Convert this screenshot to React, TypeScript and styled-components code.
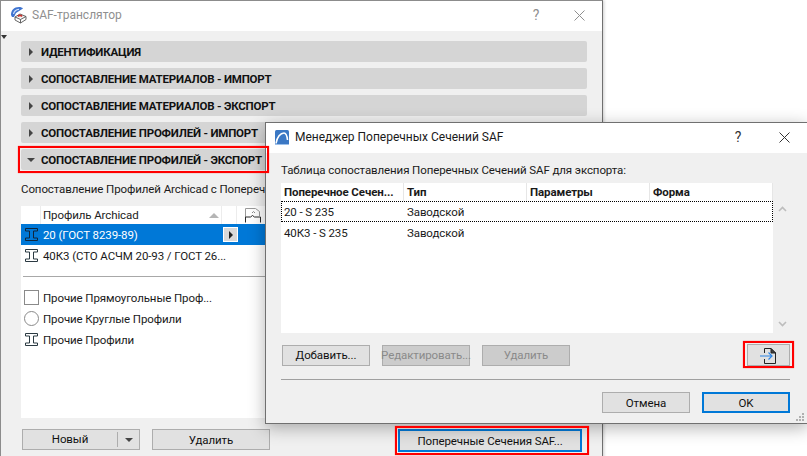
import React from "react";
import styled, {createGlobalStyle} from "styled-components";

const GlobalStyle = createGlobalStyle`
  html, body {
    margin: 0;
    height: 100%;
    overflow: hidden;
    background: #fff;
  }
  body {
    font-family: Roboto, "Open Sans", "Liberation Sans", sans-serif;
    font-size: 11.5px;
    letter-spacing: -.1px;
    color: #000;
  }
`

const Desktop = styled.div`
  position: relative;
  width: 807px;
  height: 456px;
  overflow: hidden;
`
const MainWindow = styled.div`
  position: absolute;
  left: 0;
  top: 0;
  width: 603px;
  height: 480px;
  box-sizing: border-box;
  border: 1px solid #8c8c8c;
  border-right-color: #707070;
  background: #f0f0f0;
  display: flex;
  flex-direction: column;
  box-shadow: 1px 0 3px rgba(0, 0, 0, .2);
`
const Dialog = styled.div`
  position: absolute;
  left: 265px;
  top: 122px;
  width: 543px;
  height: 302px;
  box-sizing: border-box;
  border: 1px solid #707070;
  background: #f0f0f0;
  display: flex;
  flex-direction: column;
  box-shadow: 0 4px 16px rgba(0, 0, 0, .3);
`
const TitleBar = styled.div<{ $height: number }>`
  height: ${props => props.$height}px;
  flex: none;
  background: #fff;
  display: flex;
  align-items: center;
  padding-bottom: 2px;
  box-sizing: border-box;
`
const TitleText = styled.div<{ $inactive?: boolean }>`
  font-size: 12px;
  letter-spacing: 0;
  margin-left: 4px;
  flex: 1;
  color: ${props => props.$inactive ? '#8f8f8f' : '#1a1a1a'};
`
const TitleGlyph = styled.div<{ $inactive?: boolean, $width: number }>`
  width: ${props => props.$width}px;
  text-align: center;
  font-size: 14px;
  display: flex;
  justify-content: center;
  color: ${props => props.$inactive ? '#8f8f8f' : '#333'};
`
const MainIconSlot = styled.div`
  width: 18px;
  height: 18px;
  margin-left: 9px;
`
const DialogIconSlot = styled.div`
  width: 14px;
  height: 15px;
  margin-left: 9px;
  margin-right: 2px;
`
const MainBody = styled.div`
  flex: 1;
  padding: 10px 15px 0 20px;
  display: flex;
  flex-direction: column;
  position: relative;
`
const CornerArrow = styled.div`
  position: absolute;
  left: 0;
  top: 4px;
  border-left: 3px solid transparent;
  border-right: 3px solid transparent;
  border-top: 4px solid #333;
`
const Sections = styled.div`
  display: flex;
  flex-direction: column;
  row-gap: 6px;
`
const Section = styled.div`
  height: 21px;
  background: #d5d5d5;
  border-radius: 2px;
  display: flex;
  align-items: center;
  font-weight: 700;
  font-size: 11.5px;
  letter-spacing: -.2px;
  color: #111;
  column-gap: 5px;
`
const ArrowSlot = styled.span`
  width: 15px;
  padding-left: 8px;
  box-sizing: border-box;
  display: flex;
`
const ArrowRight = styled.span`
  border-top: 4px solid transparent;
  border-bottom: 4px solid transparent;
  border-left: 4px solid #444;
`
const ArrowDown = styled.span`
  margin-left: -2px;
  border-left: 4px solid transparent;
  border-right: 4px solid transparent;
  border-top: 4px solid #444;
`
const Caption = styled.div<{ $top: number }>`
  margin-top: ${props => props.$top}px;
  height: 18px;
  line-height: 18px;
  white-space: nowrap;
  color: #1a1a1a;
`
const ProfileList = styled.div`
  margin-top: 8px;
  height: 212px;
  background: #fff;
  display: flex;
  flex-direction: column;
`
const ListHead = styled.div`
  height: 18px;
  display: flex;
  align-items: center;
`
const HeadCell = styled.div<{ $width?: number, $inset?: number }>`
  width: ${props => props.$width ?? 20}px;
  height: 100%;
  box-sizing: border-box;
  border-right: 1px solid #ececec;
  padding-left: ${props => props.$inset ?? 2}px;
  display: flex;
  align-items: center;
  justify-content: space-between;
  flex: none;
  color: #222;
`
const SortArrow = styled.span`
  margin-right: 2px;
  border-left: 5px solid transparent;
  border-right: 5px solid transparent;
  border-bottom: 5px solid #b5b5b5;
`
const ProfileRow = styled.div<{ $selected?: boolean }>`
  height: 21px;
  display: flex;
  align-items: center;
  background: ${props => props.$selected ? '#0078d7' : 'transparent'};
  color: ${props => props.$selected ? '#fff' : '#1a1a1a'};
`
const RowIcon = styled.div`
  width: 20px;
  flex: none;
  padding-left: 3px;
  box-sizing: border-box;
  display: flex;
`
const RowName = styled.div`
  width: 181px;
  flex: none;
  padding-left: 2px;
  box-sizing: border-box;
  white-space: nowrap;
`
const RowButton = styled.div`
  width: 15px;
  height: 15px;
  margin-left: 1px;
  background: #d9d9d9;
  box-sizing: border-box;
  border: 1px solid #fff;
  display: flex;
  align-items: center;
  justify-content: center;
`
const RowArrow = styled.span`
  border-top: 4px solid transparent;
  border-bottom: 4px solid transparent;
  border-left: 4px solid #222;
`
const ListDivider = styled.div`
  height: 1px;
  margin: 10px 0 10px 2px;
  background: #a8a8a8;
`
const Square = styled.span`
  width: 13px;
  height: 13px;
  border: 1px solid #8a8a8a;
  display: block;
`
const Circle = styled(Square)`
  border-radius: 50%;
`
const Footer = styled.div`
  margin-top: 11px;
  padding-left: 1px;
  display: flex;
  align-items: flex-start;
`
const Button = styled.div<{ $width?: number, $height?: number, $disabled?: boolean, $primary?: boolean, $left?: number }>`
  width: ${props => props.$width ?? 88}px;
  height: ${props => props.$height ?? 21}px;
  margin-left: ${props => props.$left ?? 0}px;
  flex: none;
  box-sizing: border-box;
  border: ${props => props.$primary ? '2px solid #0078d7' : '1px solid #adadad'};
  background: ${props => props.$disabled ? '#cccccc' : '#e1e1e1'};
  color: ${props => props.$disabled ? '#8a8a8a' : '#111'};
  display: flex;
  align-items: center;
  justify-content: center;
  white-space: nowrap;
`
const SplitButton = styled(Button)`
  justify-content: flex-start;
`
const SplitLabel = styled.span`
  flex: 1;
  text-align: center;
  border-right: 1px solid #adadad;
  line-height: 15px;
`
const SplitArrow = styled.span`
  width: 21px;
  display: flex;
  justify-content: center;

  &::before {
    content: "";
    border-left: 4px solid transparent;
    border-right: 4px solid transparent;
    border-top: 4px solid #444;
  }
`
const DialogBody = styled.div`
  flex: 1;
  padding: 8px 17px 0 15px;
  display: flex;
  flex-direction: column;
`
const TableArea = styled.div`
  margin-top: 4px;
  display: flex;
  column-gap: 2px;
`
const Table = styled.div`
  width: 492px;
  height: 150px;
  background: #fff;
`
const TableHead = styled.div`
  height: 18px;
  display: flex;
  font-weight: 700;
  color: #1a1a1a;
`
const TableHeadCell = styled.div<{ $width: number }>`
  width: ${props => props.$width}px;
  box-sizing: border-box;
  border-right: 1px solid #e6e6e6;
  padding-left: 3px;
  line-height: 18px;
  white-space: nowrap;
`
const TableRow = styled.div<{ $focused?: boolean }>`
  height: 21px;
  box-sizing: border-box;
  display: flex;
  align-items: center;
  outline: ${props => props.$focused ? '1px dotted #000' : 'none'};
  outline-offset: -1px;
  color: #1a1a1a;
`
const TableCell = styled.div<{ $width: number }>`
  width: ${props => props.$width}px;
  padding-left: 3px;
  box-sizing: border-box;
  white-space: nowrap;
`
const ScrollBar = styled.div`
  width: 15px;
  height: 150px;
  padding: 23px 0 6px;
  box-sizing: border-box;
  display: flex;
  flex-direction: column;
  justify-content: space-between;
  align-items: center;
`
const ActionRow = styled.div`
  margin-top: 11px;
  display: flex;
  column-gap: 12px;
  padding-left: 1px;
  align-items: center;
`
const Spacer = styled.div`
  flex: 1;
`
const DialogDivider = styled.div`
  height: 1px;
  background: #a0a0a0;
  margin-top: 13px;
`
const ConfirmRow = styled.div`
  margin-top: 12px;
  display: flex;
  justify-content: flex-end;
  column-gap: 12px;
`
const Grip = styled.div`
  position: absolute;
  right: 2px;
  bottom: 2px;
  width: 10px;
  height: 10px;
`
const RedFrame = styled.div<{ $x: number, $y: number, $w: number, $h: number }>`
  position: absolute;
  left: ${props => props.$x}px;
  top: ${props => props.$y}px;
  width: ${props => props.$w}px;
  height: ${props => props.$h}px;
  box-sizing: border-box;
  border: 2px solid #f00;
  box-shadow: 0 0 1px rgba(255, 0, 0, .6);
  pointer-events: none;
`

const Beam = ({color}: { color: string }) => (
  <svg width="15" height="15" viewBox="0 0 15 15" fill="none" stroke={color} strokeWidth="1">
    <path d="M1.5 1.5h12v2.500h-4v7h4v2.500h-12v-2.500h4v-7h-4z"/>
  </svg>
)
const Chevron = ({up}: { up?: boolean }) => (
  <svg width="9" height="6" viewBox="0 0 9 6" fill="none" stroke="#bdbdbd" strokeWidth="1.6">
    <path d={up ? "M1 5l3.500-3.500L8 5" : "M1 1l3.500 3.500L8 1"}/>
  </svg>
)
const Cross = ({color}: { color: string }) => (
  <svg width="11" height="11" viewBox="0 0 11 11" stroke={color} strokeWidth="1">
    <path d="M.5.5l10 10M10.500.5l-10 10"/>
  </svg>
)
const SafIcon = () => (
  <svg width="18" height="18" viewBox="0 0 18 18" fill="none">
    <path d="M1 9C1 4 4 1 9 1c2 0 3 .5 4 1.500L6 7l-2 4H2z" fill="#3f74d0"/>
    <path d="M3.500 8C4 5.500 6 3.500 9 3.300" stroke="#cfe0fa" strokeWidth="1.200"/>
    <path d="M5 11l5-3 6 2.500-5.500 3z" fill="#f4f4f4" stroke="#555" strokeWidth=".9"/>
    <path d="M5 11v3l5.500 3 5.500-3.500v-3" stroke="#555" strokeWidth=".9"/>
    <path d="M8 10.500c1-1.500 3-1.500 4 0" stroke="#c8342f" strokeWidth="1.600"/>
    <path d="M10.500 13.500V17" stroke="#555" strokeWidth=".9"/>
  </svg>
)
const ArchicadIcon = () => (
  <svg width="14" height="15" viewBox="0 0 14 15" fill="none">
    <rect width="14" height="15" rx="1.500" fill="#3b78c4"/>
    <path d="M1 13.500C2 7 5.500 3 9 3c2 0 3 2.500 3.500 7" stroke="#fff" strokeWidth="1.600"/>
    <path d="M0 14.500h14" stroke="#9cc0ea"/>
  </svg>
)
const FlagIcon = () => (
  <svg width="17" height="16" viewBox="0 0 17 16" fill="none">
    <path d="M.5 10V1.500h10l4 3V9" stroke="#9a9a9a"/>
    <path d="M7 6l1.500-1.500L10 6" stroke="#8a8a8a"/>
    <path d="M.5 15.500v-5.500h5l2-1.500 2 1.500h6v5.500" stroke="#2a2a2a"/>
  </svg>
)
const ExportIcon = () => (
  <svg width="17" height="17" viewBox="0 0 17 17" fill="none">
    <path d="M4.500 6V1.500h6.500l4.500 4.500v10.500h-11V12" stroke="#222"/>
    <path d="M11 1.500V6h4.500z" fill="#444" stroke="#222"/>
    <path d="M0 9h12M8.500 5.500L12 9l-3.500 3.500" stroke="#2f86e6" strokeWidth="1.200"/>
  </svg>
)
const GripIcon = () => (
  <svg width="10" height="10" viewBox="0 0 10 10" fill="#b0b0b0">
    <rect x="7" y="1" width="2" height="2"/>
    <rect x="4" y="4" width="2" height="2"/>
    <rect x="7" y="4" width="2" height="2"/>
    <rect x="1" y="7" width="2" height="2"/>
    <rect x="4" y="7" width="2" height="2"/>
    <rect x="7" y="7" width="2" height="2"/>
  </svg>
)

const closedSections = [
  'ИДЕНТИФИКАЦИЯ',
  'СОПОСТАВЛЕНИЕ МАТЕРИАЛОВ - ИМПОРТ',
  'СОПОСТАВЛЕНИЕ МАТЕРИАЛОВ - ЭКСПОРТ',
  'СОПОСТАВЛЕНИЕ ПРОФИЛЕЙ - ИМПОРТ',
]
const columns = [
  {title: 'Поперечное Сечен...', width: 123},
  {title: 'Тип', width: 123},
  {title: 'Параметры', width: 123},
  {title: 'Форма', width: 123},
]
const sections = [
  {name: '20 - S 235', type: 'Заводской', focused: true},
  {name: '40К3 - S 235', type: 'Заводской', focused: false},
]

export default function App() {
  return (
    <Desktop>
      <GlobalStyle/>
      <MainWindow>
        <TitleBar $height={30}>
          <MainIconSlot><SafIcon/></MainIconSlot>
          <TitleText $inactive>SAF-транслятор</TitleText>
          <TitleGlyph $inactive $width={40}>?</TitleGlyph>
          <TitleGlyph $inactive $width={46}><Cross color="#8f8f8f"/></TitleGlyph>
        </TitleBar>
        <MainBody>
          <CornerArrow/>
          <Sections>
            {closedSections.map(title => (
              <Section key={title}>
                <ArrowSlot><ArrowRight/></ArrowSlot>
                {title}
              </Section>
            ))}
            <Section>
              <ArrowSlot><ArrowDown/></ArrowSlot>
              СОПОСТАВЛЕНИЕ ПРОФИЛЕЙ - ЭКСПОРТ
            </Section>
          </Sections>
          <Caption $top={10}>Сопоставление Профилей Archicad с Поперечными Сечениями</Caption>
          <ProfileList>
            <ListHead>
              <HeadCell/>
              <HeadCell $width={181}>Профиль Archicad<SortArrow/></HeadCell>
              <HeadCell $width={15}/>
              <HeadCell $width={30} $inset={8}><FlagIcon/></HeadCell>
            </ListHead>
            <ProfileRow $selected>
              <RowIcon><Beam color="#10263c"/></RowIcon>
              <RowName>20 (ГОСТ 8239-89)</RowName>
              <RowButton><RowArrow/></RowButton>
            </ProfileRow>
            <ProfileRow>
              <RowIcon><Beam color="#2b3a42"/></RowIcon>
              <RowName>40К3 (СТО АСЧМ 20-93 / ГОСТ 26...</RowName>
            </ProfileRow>
            <ListDivider/>
            <ProfileRow>
              <RowIcon><Square/></RowIcon>
              <RowName>Прочие Прямоугольные Проф...</RowName>
            </ProfileRow>
            <ProfileRow>
              <RowIcon><Circle/></RowIcon>
              <RowName>Прочие Круглые Профили</RowName>
            </ProfileRow>
            <ProfileRow>
              <RowIcon><Beam color="#2b3a42"/></RowIcon>
              <RowName>Прочие Профили</RowName>
            </ProfileRow>
          </ProfileList>
          <Footer>
            <SplitButton $width={118}>
              <SplitLabel>Новый</SplitLabel>
              <SplitArrow/>
            </SplitButton>
            <Button $width={118} $left={12}>Удалить</Button>
            <Button $width={184} $height={23} $left={128} $primary>Поперечные Сечения SAF...</Button>
          </Footer>
        </MainBody>
      </MainWindow>

      <Dialog>
        <TitleBar $height={30}>
          <DialogIconSlot><ArchicadIcon/></DialogIconSlot>
          <TitleText>Менеджер Поперечных Сечений SAF</TitleText>
          <TitleGlyph $width={46}>?</TitleGlyph>
          <TitleGlyph $width={46}><Cross color="#333"/></TitleGlyph>
        </TitleBar>
        <DialogBody>
          <Caption $top={0}>Таблица сопоставления Поперечных Сечений SAF для экспорта:</Caption>
          <TableArea>
            <Table>
              <TableHead>
                {columns.map(column => (
                  <TableHeadCell key={column.title} $width={column.width}>{column.title}</TableHeadCell>
                ))}
              </TableHead>
              {sections.map(section => (
                <TableRow key={section.name} $focused={section.focused}>
                  <TableCell $width={123}>{section.name}</TableCell>
                  <TableCell $width={123}>{section.type}</TableCell>
                </TableRow>
              ))}
            </Table>
            <ScrollBar>
              <Chevron up/>
              <Chevron/>
            </ScrollBar>
          </TableArea>
          <ActionRow>
            <Button>Добавить...</Button>
            <Button $disabled>Редактировать...</Button>
            <Button $disabled>Удалить</Button>
            <Spacer/>
            <Button $width={43} $height={22}><ExportIcon/></Button>
          </ActionRow>
          <DialogDivider/>
          <ConfirmRow>
            <Button>Отмена</Button>
            <Button $primary>OK</Button>
          </ConfirmRow>
        </DialogBody>
        <Grip><GripIcon/></Grip>
      </Dialog>

      <RedFrame $x={18} $y={146} $w={251} $h={27}/>
      <RedFrame $x={743} $y={341} $w={51} $h={27}/>
      <RedFrame $x={395} $y={426} $w={194} $h={29}/>
    </Desktop>
  )
}
